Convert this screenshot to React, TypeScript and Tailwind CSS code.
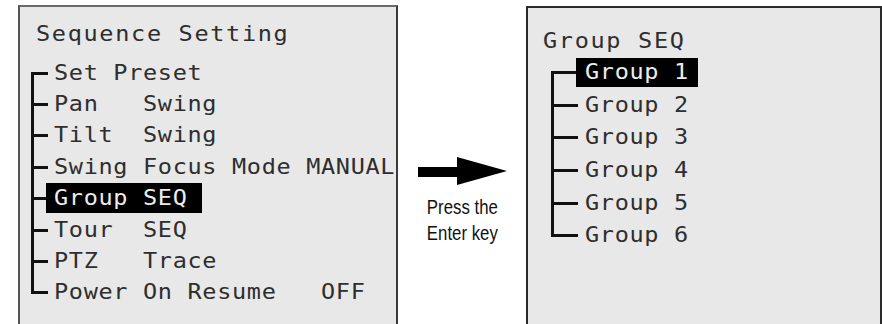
import React from "react";

type Row = { label: string; active?: boolean };

const leftRows: Row[] = [
  { label: "Set Preset" },
  { label: "Pan   Swing" },
  { label: "Tilt  Swing" },
  { label: "Swing Focus Mode MANUAL" },
  { label: "Group SEQ", active: true },
  { label: "Tour  SEQ" },
  { label: "PTZ   Trace" },
  { label: "Power On Resume   OFF" },
];

const rightRows: Row[] = [
  { label: "Group 1", active: true },
  { label: "Group 2" },
  { label: "Group 3" },
  { label: "Group 4" },
  { label: "Group 5" },
  { label: "Group 6" },
];

const MONO = '"DejaVu Sans Mono", "Liberation Mono", monospace';

function Tree({
  rows,
  rowH,
  connW,
  boxW,
  boxH,
  padL,
}: {
  rows: Row[];
  rowH: string;
  connW: string;
  boxW: string;
  boxH: string;
  padL: string;
}) {
  return (
    <div className="flex flex-col">
      {rows.map((r, i) => {
        const first = i === 0;
        const last = i === rows.length - 1;
        return (
          <div key={i} className={`flex items-center ${rowH}`}>
            <div className={`relative h-full shrink-0 ${connW}`}>
              <div
                className={`absolute left-0 w-[3px] bg-[#111] ${
                  first ? "top-1/2 bottom-0 -mt-[1px]" : last ? "top-0" : "top-0 bottom-0"
                }`}
                style={last ? { height: "calc(50% + 2px)" } : undefined}
              />
              <div className="absolute left-0 top-1/2 -mt-[1px] h-[3px] w-[calc(100%+2px)] bg-[#111]" />
            </div>
            <div
              className={`relative flex items-center whitespace-pre ${padL} ${
                r.active ? `bg-black text-[#ececec] ${boxW} ${boxH}` : "text-[#2e2e2e]"
              }`}
            >
              <span className="inline-block origin-left scale-x-[1.12]">{r.label}</span>
            </div>
          </div>
        );
      })}
    </div>
  );
}

export default function App() {
  return (
    <div className="w-[882px] h-[324px] overflow-hidden bg-white flex pt-[5px]">
      {/* Left panel */}
      <div
        className="ml-[18px] w-[380px] h-[340px] shrink-0 bg-[#e8e8e8] border-2 border-[#3a3a3a] border-t-[#6a6a6a] border-l-[#555]"
        style={{ fontFamily: MONO, fontSize: "21px" }}
      >
        <div className="pl-[16px] pt-[12px] leading-[30px] tracking-[1.5px] text-[#2e2e2e]">
          <span className="inline-block origin-left scale-x-[1.12] whitespace-pre">Sequence Setting</span>
        </div>
        <div className="mt-[8px] pl-[11px] tracking-[0.6px] leading-[30px]">
          <Tree rows={leftRows} rowH="h-[31.4px]" connW="w-[15px]" boxW="w-[156px]" boxH="h-[30px]" padL="pl-[8px]" />
        </div>
      </div>

      {/* Middle arrow */}
      <div className="w-[128px] shrink-0 flex flex-col">
        <svg className="ml-[20px] mt-[152px]" width="89" height="28" viewBox="0 0 89 28">
          <rect x="0" y="10" width="42" height="10" fill="#000" />
          <polygon points="39,0 89,14 39,28" fill="#000" />
        </svg>
        <div
          className="mt-[9px] text-center text-[21px] leading-[26px] text-[#111]"
          style={{ fontFamily: '"Liberation Sans", Arial, sans-serif' }}
        >
          <div className="inline-block scale-x-[0.8] whitespace-nowrap">Press the</div>
          <div />
          <div className="inline-block scale-x-[0.8] whitespace-nowrap">Enter key</div>
        </div>
      </div>

      {/* Right panel */}
      <div
        className="w-[356px] h-[340px] shrink-0 mt-[1px] bg-[#e8e8e8] border-2 border-[#2a2a2a]"
        style={{ fontFamily: MONO, fontSize: "21px" }}
      >
        <div className="pl-[15px] pt-[18px] leading-[30px] tracking-[1.5px] text-[#2e2e2e]">
          <span className="inline-block origin-left scale-x-[1.12] whitespace-pre">Group SEQ</span>
        </div>
        <div className="pl-[23px] tracking-[0.6px] leading-[30px]">
          <Tree rows={rightRows} rowH="h-[32.6px]" connW="w-[25px]" boxW="w-[122px]" boxH="h-[29px]" padL="pl-[9px]" />
        </div>
      </div>
    </div>
  );
}
